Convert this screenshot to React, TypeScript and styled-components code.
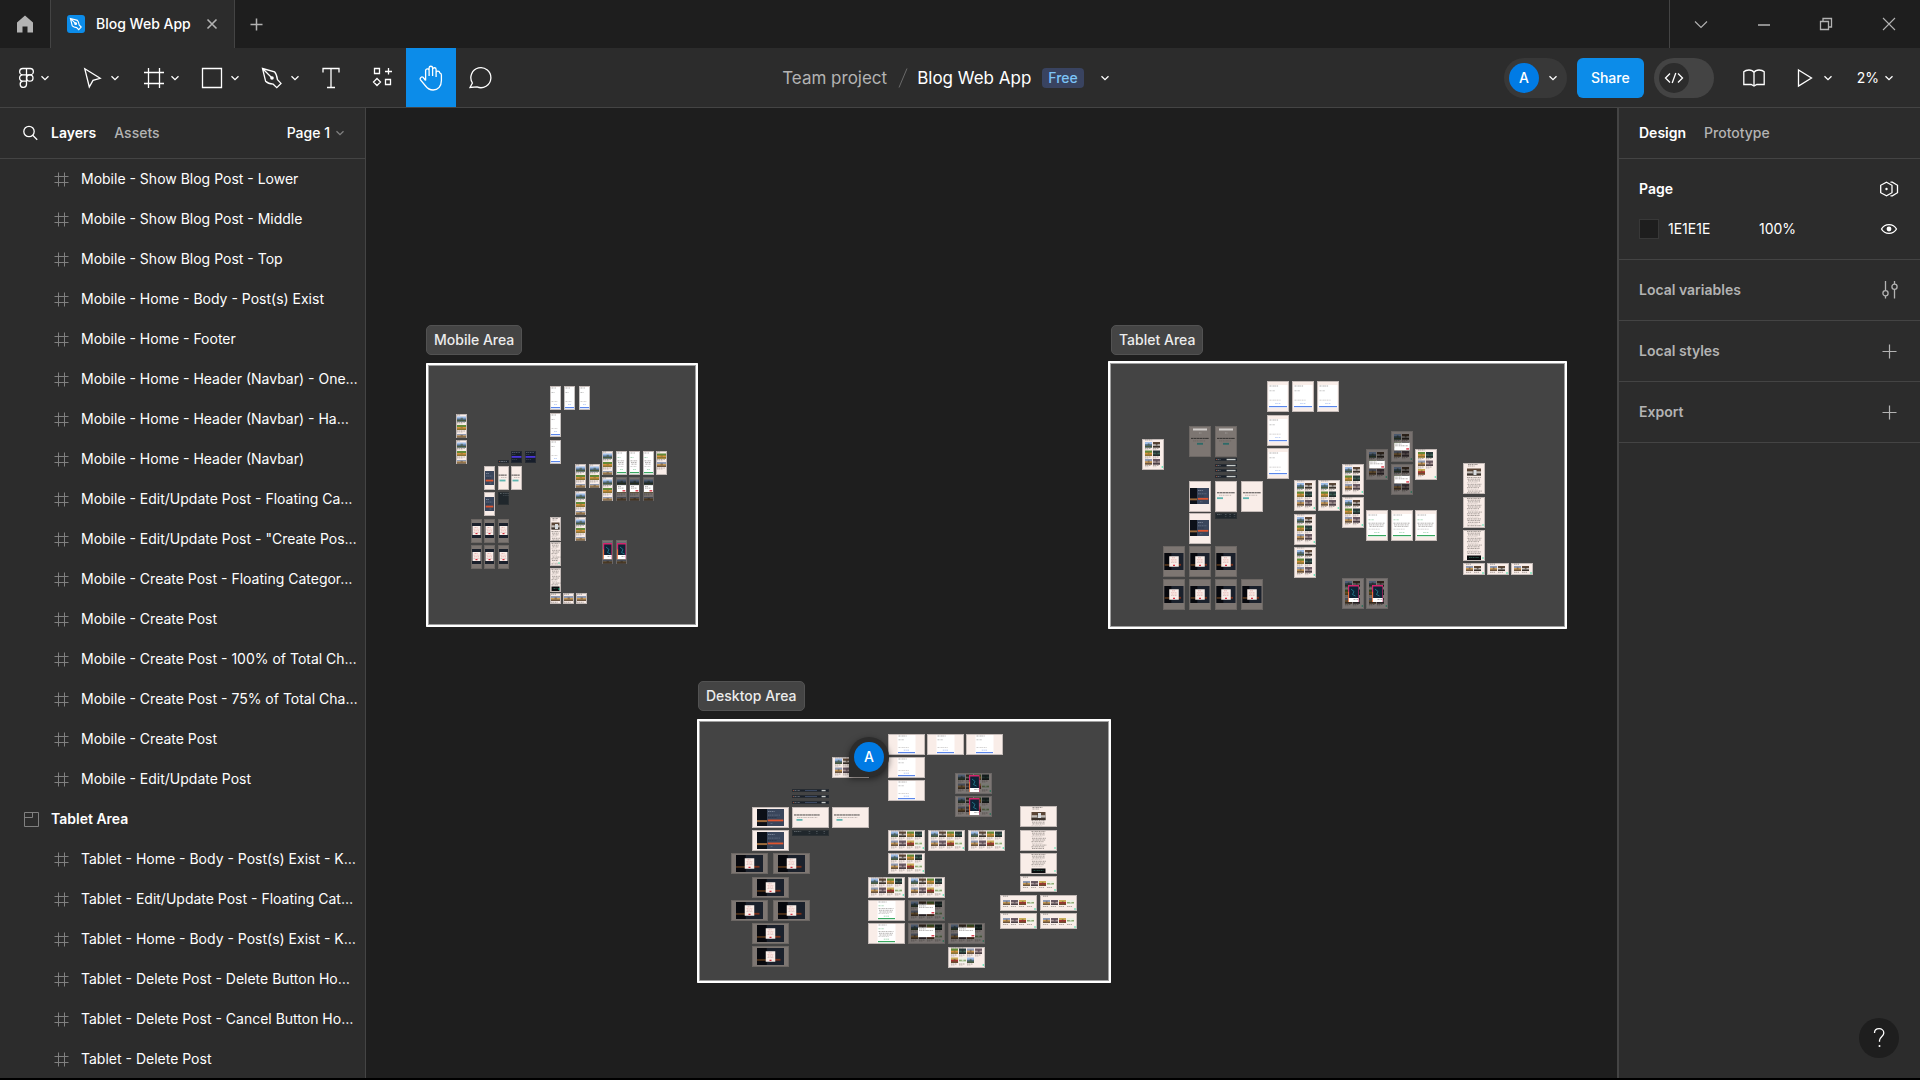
import React from "react";
import styled, { createGlobalStyle } from "styled-components";

/* ---------- theme ---------- */
const c = {
  bar: "#1e1e1e",
  panel: "#2c2c2c",
  line: "#444444",
  raised: "#383838",
  blue: "#0c8ce9",
  avatar: "#007be5",
  text: "#ffffff",
  muted: "#b3b3b3",
  faint: "#808080",
};

const GlobalStyle = createGlobalStyle`
  *, *::before, *::after { box-sizing: border-box; }
  body { margin: 0; background: #000; }
  button, input { font: inherit; color: inherit; }
  button { background: none; border: 0; padding: 0; margin: 0; }
  h1, h2, ul { margin: 0; padding: 0; font: inherit; }
`;

const Window = styled.div`
  display: flex;
  flex-direction: column;
  height: 100vh;
  overflow: hidden;
  border-bottom: 2px solid #000;
  background: ${c.bar};
  color: ${c.text};
  font-family: Inter, "Liberation Sans", sans-serif;
  font-size: 14px;
  line-height: 20px;
`;

const Icon = styled.svg<{ $size?: number }>`
  display: block;
  flex: none;
  width: ${(p) => p.$size ?? 24}px;
  height: ${(p) => p.$size ?? 24}px;
  fill: none;
  stroke: currentColor;
  stroke-width: 1.3;
`;

const Chevron = ({ size = 10 }: { size?: number }) => (
  <Icon $size={size} viewBox="0 0 10 10" aria-hidden="true">
    <path d="M1.5 3.2 5 6.7 8.500 3.2" />
  </Icon>
);

/* ---------- title bar ---------- */
const TitleBar = styled.header`
  display: flex;
  flex: none;
  height: 48px;
  color: ${c.muted};
`;
const HomeButton = styled.button`
  display: grid;
  place-items: center;
  width: 50px;
`;
const FileTab = styled.div`
  display: flex;
  align-items: center;
  gap: 11px;
  padding: 0 12px 0 16px;
  background: ${c.panel};
  border: solid ${c.line};
  border-width: 0 1px;
`;
const TabName = styled.span`
  color: ${c.text};
  font-weight: 500;
`;
const TabButton = styled.button`
  display: grid;
  place-items: center;
  width: 20px;
`;
const NewTabButton = styled.button`
  display: grid;
  place-items: center;
  width: 42px;
`;
const WindowControls = styled.div`
  display: flex;
  width: 251px;
  margin-left: auto;
  border-left: 1px solid ${c.line};
`;
const WindowButton = styled.button`
  display: grid;
  place-items: center;
  flex: 1;
`;

/* ---------- toolbar ---------- */
const Toolbar = styled.div`
  display: grid;
  grid-template-columns: 1fr auto 1fr;
  flex: none;
  height: 60px;
  background: ${c.panel};
  border-bottom: 1px solid ${c.line};
`;
const Tools = styled.div`
  display: flex;
`;
const SplitTool = styled.button<{ $width?: number; $spaced?: boolean }>`
  display: flex;
  align-items: center;
  gap: 6px;
  width: ${(p) => p.$width ?? 60}px;
  padding-left: 10px;
  margin-right: ${(p) => (p.$spaced ? 10 : 0)}px;
`;
const MenuTool = styled(SplitTool)`
  gap: 2px;
  padding-left: 14px;
`;
const Tool = styled.button<{ $active?: boolean }>`
  display: grid;
  place-items: center;
  width: 50px;
  background: ${(p) => (p.$active ? c.blue : "transparent")};
`;
const FileTitle = styled.div`
  display: flex;
  align-items: center;
  padding-right: 12px;
  font-size: 17px;
`;
const Project = styled.a`
  color: ${c.muted};
  text-decoration: none;
`;
const Slash = styled.svg`
  width: 30px;
  height: 22px;
  fill: none;
  stroke: #6a6a6a;
`;
const Plan = styled.span`
  margin-left: 11px;
  padding: 0 6px;
  border-radius: 4px;
  background: #394360;
  color: #7cc4f8;
  font-size: 14px;
  font-weight: 500;
`;
const TitleMenu = styled.button`
  display: grid;
  place-items: center;
  width: 42px;
  height: 40px;
`;
const Actions = styled.div`
  display: flex;
  align-items: center;
  justify-content: flex-end;
`;
const UserButton = styled.button`
  display: flex;
  align-items: center;
  gap: 9px;
  width: 63px;
  height: 40px;
  padding-left: 5px;
  border-radius: 20px;
  background: ${c.raised};
`;
const Avatar = styled.span`
  display: grid;
  place-items: center;
  width: 30px;
  height: 30px;
  border-radius: 50%;
  background: ${c.avatar};
  font-weight: 500;
`;
const ShareButton = styled.button`
  height: 40px;
  margin: 0 10px;
  padding: 0 14px;
  border-radius: 6px;
  background: ${c.blue};
  font-weight: 500;
`;
const DevSwitch = styled.label`
  display: flex;
  align-items: center;
  width: 60px;
  height: 40px;
  padding-left: 5px;
  border-radius: 20px;
  background: ${c.line};
`;
const HiddenInput = styled.input`
  appearance: none;
  width: 0;
  height: 0;
  margin: 0;
`;
const Knob = styled.span`
  display: grid;
  place-items: center;
  width: 30px;
  height: 30px;
  border-radius: 50%;
  background: ${c.panel};
`;
const LibraryButton = styled.button`
  display: grid;
  place-items: center;
  width: 80px;
  height: 40px;
`;
const ActionMenu = styled.button`
  display: flex;
  align-items: center;
  gap: 5px;
  height: 40px;
`;
const ZoomMenu = styled(ActionMenu)`
  margin-left: 24px;
  padding-right: 26px;
`;

/* ---------- body ---------- */
const Body = styled.div`
  display: flex;
  flex: 1;
  min-height: 0;
`;
const LayersPanel = styled.aside`
  display: flex;
  flex-direction: column;
  flex: none;
  width: 366px;
  background: ${c.panel};
  border-right: 1px solid ${c.line};
`;
const PanelHeader = styled.div`
  display: flex;
  align-items: center;
  flex: none;
  gap: 18px;
  height: 51px;
  padding: 0 20px;
  border-bottom: 1px solid ${c.line};
`;
const PanelTab = styled.button<{ $active?: boolean }>`
  color: ${(p) => (p.$active ? c.text : c.muted)};
  font-weight: ${(p) => (p.$active ? 600 : 500)};
`;
const SearchButton = styled.button`
  margin-right: -7px;
`;
const PageMenu = styled.button`
  display: flex;
  align-items: center;
  gap: 5px;
  margin-left: auto;
  font-weight: 500;

  svg { color: ${c.faint}; }
`;
const LayerList = styled.ul`
  flex: 1;
  min-height: 0;
  overflow: hidden;
  list-style: none;
`;
const LayerRow = styled.li<{ $section?: boolean }>`
  display: flex;
  align-items: center;
  gap: 11px;
  height: 40px;
  padding-left: ${(p) => (p.$section ? 23 : 53)}px;
  white-space: nowrap;
  font-weight: ${(p) => (p.$section ? 600 : 400)};

  svg { color: ${c.faint}; }
`;

const DesignPanel = styled.aside`
  position: relative;
  flex: none;
  width: 303px;
  background: ${c.panel};
  border-left: 2px solid ${c.line};
`;
const Group = styled.section`
  padding: 10px 21px 10px 20px;
  border-bottom: 1px solid ${c.line};
`;
const GroupRow = styled.div<{ $strong?: boolean }>`
  display: flex;
  align-items: center;
  justify-content: space-between;
  height: 40px;
  color: ${(p) => (p.$strong ? c.text : c.muted)};
  font-weight: 600;
`;
const FillRow = styled.div`
  display: flex;
  align-items: center;
  height: 40px;
`;
const Swatch = styled.button`
  width: 20px;
  height: 20px;
  background: #1e1e1e;
  border: 1px solid #383838;
`;
const ValueInput = styled.input<{ $width: number }>`
  width: ${(p) => p.$width}px;
  margin-left: 9px;
  padding: 0;
  border: 0;
  background: none;
  outline: 0;
`;
const IconButton = styled.button`
  margin-left: auto;
`;
const HelpButton = styled.button`
  position: absolute;
  right: 21px;
  bottom: 20px;
  display: grid;
  place-items: center;
  width: 40px;
  height: 40px;
  border-radius: 50%;
  background: #1e1e1e;
`;

/* ---------- canvas ---------- */
const Canvas = styled.main`
  position: relative;
  flex: 1;
  overflow: hidden;
  background: #1e1e1e;
`;
const SectionLabel = styled.h2<{ $x: number; $y: number }>`
  position: absolute;
  left: ${(p) => p.$x}px;
  top: ${(p) => p.$y}px;
  padding: 4px 7px;
  border: 1px solid #525252;
  border-radius: 5px;
  background: #444444;
  color: #ececec;
  font-weight: 500;
  white-space: nowrap;
`;
const SectionBox = styled.div<{ $x: number; $y: number; $w: number; $h: number }>`
  position: absolute;
  left: ${(p) => p.$x}px;
  top: ${(p) => p.$y}px;
  width: ${(p) => p.$w}px;
  height: ${(p) => p.$h}px;
  border-radius: 1px;
  background: #444444;
  box-shadow: inset 0 0 0 2px #fff, inset 0 0 0 3px #a0a0a0;
`;
const Frame = styled.svg<{ $x: number; $y: number; $w: number; $h: number }>`
  position: absolute;
  left: ${(p) => p.$x}px;
  top: ${(p) => p.$y}px;
  width: ${(p) => p.$w}px;
  height: ${(p) => p.$h}px;
`;
const Collaborator = styled.div`
  position: absolute;
  left: 483px;
  top: 629px;
  display: grid;
  place-items: center;
  width: 40px;
  height: 40px;
  border-radius: 20px 20px 20px 0;
  background: ${c.panel};
  box-shadow: 0 2px 6px rgba(0, 0, 0, 0.5);
`;

/* ---------- miniature artboards ---------- */
const CREAM = "#f9ede8";
const DIM = "#7d7672";

// sky, middle, ground
const photos: Record<string, [string, string, string]> = {
  city: ["#9dbbe6", "#4f6a80", "#4a5a3e"],
  person: ["#5b4636", "#c2bdb8", "#3b322c"],
  food: ["#5f8a38", "#d8913c", "#8a7434"],
  night: ["#26393a", "#3f6256", "#242c2c"],
  dusk: ["#8f9ab2", "#c99a55", "#6b5540"],
  table: ["#6a5a64", "#aa9898", "#4c4046"],
  wine: ["#c8ac58", "#a83030", "#6a4c30"],
  herb: ["#ecf0e4", "#8fac74", "#f4f4ee"],
};
const order = ["city", "person", "food", "night", "dusk", "table", "wine", "herb"];

const Photo = ({ x, y, w, h, name }: { x: number; y: number; w: number; h: number; name: string }) => {
  const [a, b, d] = photos[name];
  return (
    <g>
      <rect x={x} y={y} width={w} height={h} fill={a} />
      <rect x={x} y={y + h * 0.4} width={w} height={h * 0.6} fill={b} />
      <rect x={x} y={y + h * 0.7} width={w} height={h * 0.3} fill={d} />
      <rect x={x + w * 0.4} y={y + h * 0.25} width={w * 0.25} height={h * 0.4} fill={d} opacity={0.6} />
    </g>
  );
};

const Line = ({ x, y, w, color = "#4a4441", o = 0.6 }: { x: number; y: number; w: number; color?: string; o?: number }) => (
  <path d={`M${x} ${y}h${w}`} stroke={color} strokeWidth={0.7} strokeDasharray="1.6 .5 .9 .6" opacity={o} />
);

const Feed = ({ w, h, alt }: { w: number; h: number; alt?: boolean }) => {
  const phone = w < 15;
  const wide = w > 30;
  const xs = phone ? [1] : wide ? [3, 11, 19, 27] : [3, 11];
  const ys = phone ? [2.5, 11, 20] : wide ? [1.5, 10.5] : [3, 11.5, 20];
  const pw = phone ? 9 : 7;
  const ph = phone ? 5 : 5.5;
  const phoneOrder = alt ? ["food", "dusk"] : ["city", "food", "dusk"];
  let i = 0;
  return (
    <g>
      {ys.map((y, r) =>
        xs.map((x) => {
          const name = phone ? phoneOrder[r] : order[alt ? (i + 2) % 8 : i];
          i += 1;
          if (!name || (alt && !phone && i > (wide ? 7 : 5))) return null;
          return (
            <g key={`${x}-${y}`}>
              <Photo x={x} y={y} w={pw} h={Math.min(ph, h - y - 0.5)} name={name} />
              {y + ph + 1 < h && <Line x={x} y={y + ph + 1} w={pw - 1} />}
              {y + ph + 2.2 < h && <Line x={x} y={y + ph + 2.2} w={pw - 3} o={0.3} />}
            </g>
          );
        })
      )}
      {!phone && <circle cx={w - 1.7} cy={h - 3} r={0.8} fill="#1ee0a0" />}
    </g>
  );
};

type Kind =
  | "feed" | "feedAlt" | "formBlue" | "formGreen" | "signin" | "hero" | "heroDim" | "modal" | "dialog"
  | "popup" | "article" | "text" | "textEnd" | "strip" | "nav" | "menu" | "footer";

const Art = ({ kind, w, h }: { kind: Kind; w: number; h: number }) => {
  const phone = w < 15;
  const wide = w > 30;
  const mid = w / 2;
  const bg = (fill: string) => <rect width={w} height={h} fill={fill} />;
  const rows = (from: number, to: number, x: number, lw: number, color?: string) => {
    const out = [];
    for (let y = from, i = 0; y < to; y += 1.7, i += 1) {
      out.push(<Line key={y} x={x + (i % 3) / 2} y={y} w={lw - ((i * 5) % 4)} color={color} o={i % 4 === 3 ? 0.2 : 0.6} />);
    }
    return out;
  };
  switch (kind) {
    case "feed":
    case "feedAlt":
      return <>{bg(CREAM)}<Line x={phone ? 1 : 3} y={1} w={w / 3} /><Feed w={w} h={h} alt={kind === "feedAlt"} /></>;
    case "formBlue":
    case "formGreen": {
      const green = kind === "formGreen";
      const accent = green ? "#3aa860" : "#5b86ea";
      const fw = phone ? 10 : wide ? 18 : 19;
      const fx = (w - fw) / 2;
      const top = phone || wide ? 1 : 4;
      const bottom = phone || wide ? h - 1 : h - 4;
      return (
        <>
          {bg(CREAM)}
          <rect x={fx} y={top} width={fw} height={bottom - top} fill="#fff" />
          <Line x={fx + 1} y={top + 1} w={fw * 0.45} />
          <Line x={fx + 1} y={top + (bottom - top) * 0.25} w={fw * 0.3} color={green ? accent : "#777"} />
          {green && rows(top + (bottom - top) * 0.4, top + (bottom - top) * 0.6, fx + 1, fw - 3)}
          <Line x={fx + 1} y={top + (bottom - top) * 0.66} w={fw * 0.6} o={0.35} />
          <Line x={mid - fw * 0.15} y={top + (bottom - top) * 0.8} w={fw * 0.3} color={accent} />
          <rect x={fx + 0.5} y={bottom - 2} width={fw - 1} height={1.2} fill={accent} />
        </>
      );
    }
    case "signin": {
      const y = phone ? 5 : wide ? 2 : 7;
      const ih = phone ? 14 : wide ? 17 : 16;
      const x = wide ? 5 : 1;
      const iw = phone ? 9 : wide ? 27 : 19;
      const px = phone ? x : x + iw * 0.37;
      const pw = phone ? iw : iw * 0.63;
      return (
        <>
          {bg(CREAM)}
          <rect x={x} y={y} width={iw} height={ih} fill="#0c1018" />
          {!phone && <rect x={x} y={y + ih * 0.65} width={iw * 0.37} height={ih * 0.12} fill="#9a6a3c" />}
          <rect x={px} y={y} width={pw} height={ih} fill="#3a465c" />
          <Line x={px + 1} y={y + 2.5} w={pw * 0.4} color="#cfd6e4" />
          <Line x={px + 1} y={y + ih * 0.36} w={pw * 0.7} color="#8d97aa" />
          <Line x={px + 1} y={y + ih * 0.5} w={pw * 0.5} color="#1a2230" />
          <rect x={px + 0.7} y={y + ih * 0.62} width={pw - 1.4} height={1.8} fill="#e0552f" />
          <Line x={mid} y={y + ih * 0.86} w={2.5} color="#8d97aa" />
        </>
      );
    }
    case "hero":
    case "heroDim": {
      const dim = kind === "heroDim";
      const y = dim ? h * 0.4 : h * 0.38;
      return (
        <>
          {bg(dim ? DIM : CREAM)}
          {dim && <rect x={4} y={2.5} width={14} height={2} fill="#d0ccc9" />}
          {dim && <Line x={10} y={7} w={2.5} color="#ccc" />}
          <path d={`M${phone ? 0.5 : 2} ${y}H${w - (wide ? 9 : 2)}`} stroke="#222" strokeWidth={1} strokeDasharray="2.2 .3 3 .3" opacity={0.8} />
          <Line x={phone ? 3 : wide ? 5 : 4} y={y + 2.5} w={w * 0.55} o={0.45} />
          <rect x={dim ? 8 : phone ? 1.5 : wide ? 4.5 : 2} y={y + (wide ? 4 : 4.5)} width={6} height={1.8} fill={dim ? "#2d6a68" : "#5fb5b0"} />
        </>
      );
    }
    case "modal": {
      const ix = phone ? 1 : wide ? 5 : 1.5;
      const iy = phone ? 4 : wide ? 2 : 7;
      const iw = phone ? 9 : wide ? 27 : 19;
      const ih = phone ? 15 : 17;
      const mw = phone ? 8 : 9.5;
      const mh = phone ? 9 : 10.5;
      const my = iy + (ih - mh) / 2;
      return (
        <>
          {bg(DIM)}
          <rect x={ix} y={iy} width={iw} height={ih} fill="#1b212c" />
          {!phone && <rect x={ix} y={iy} width={iw * 0.36} height={ih} fill="#07080d" />}
          {!phone && <rect x={ix} y={iy + ih * 0.66} width={iw * 0.36} height={1.5} fill="#5e3a1c" />}
          {!phone && <rect x={mid} y={iy + ih * 0.64} width={iw * 0.37} height={1.8} fill="#7c3019" />}
          <rect x={mid - mw / 2} y={my} width={mw} height={mh} fill={CREAM} />
          <Line x={mid - 2} y={my + 1.5} w={3.5} color="#d07070" />
          <Line x={mid - 3} y={my + 3.2} w={6} color="#e09a96" />
          <Line x={mid - 2.5} y={my + 4.8} w={5} color="#e08080" />
          <Line x={mid - 3} y={my + 6.4} w={6} color="#b08a86" />
          <rect x={mid - 1} y={my + mh - 2} width={2} height={1.2} fill="#d8283a" />
        </>
      );
    }
    case "dialog": {
      const dw = phone ? 9 : wide ? 17 : 15.5;
      const dh = phone ? 7 : wide ? 9.5 : 7.5;
      const dy = h * (phone ? 0.34 : wide ? 0.22 : 0.38);
      return (
        <>
          {bg(CREAM)}
          <Feed w={w} h={h} />
          <rect width={w} height={h} fill="#000" opacity={0.52} />
          <rect x={mid - dw / 2} y={dy} width={dw} height={dh} fill="#fff" />
          <Line x={mid - dw / 2 + 1} y={dy + 1.3} w={dw * 0.4} />
          <Line x={mid - dw / 2 + 1} y={dy + 3} w={dw - 3} />
          <rect x={mid + dw / 2 - 3.5} y={dy + dh - 2} width={2.8} height={1.3} fill="#d8283a" />
        </>
      );
    }
    case "popup": {
      const pw = phone ? 9 : wide ? 10.5 : 11;
      const px = phone ? 1 : wide ? 14 : 6;
      const py = phone ? 3 : wide ? 2 : 7;
      const ph = phone ? 16 : 17;
      return (
        <>
          {bg(CREAM)}
          <Feed w={w} h={h} />
          <rect width={w} height={h} fill="#000" opacity={0.5} />
          <rect x={px} y={py} width={pw} height={ph} fill="#d4246c" />
          <rect x={px} y={py + ph * 0.4} width={1.2} height={ph * 0.6} fill="#e8703a" />
          <rect x={px + 1.2} y={py + 1.5} width={pw - 1.8} height={ph - 5.5} fill="#0d2436" />
          <path d={`M${px + 3} ${py + 4}l3 2.5-1.5 3 3 1.5`} stroke="#2a8ca0" strokeWidth={0.9} fill="none" opacity={0.8} />
          <rect x={px + 0.8} y={py + ph - 4} width={pw - 1.2} height={4} fill="#fff" />
          <Line x={px + pw / 2} y={py + ph - 2.5} w={pw / 2 - 1} />
        </>
      );
    }
    case "article":
    case "text":
    case "textEnd": {
      const tw = phone ? 8 : 14;
      const tx = (w - tw) / 2;
      const image = kind === "article";
      const ih = wide ? 8 : 7;
      const end = kind === "textEnd" ? h - 6 : h - 1;
      return (
        <>
          {bg(CREAM)}
          {image && <Line x={tx + 1} y={1.5} w={tw * 0.7} color="#111" />}
          {image && <Line x={tx + 1} y={3} w={tw * 0.5} />}
          {image && <Photo x={tx} y={wide ? 6 : 5.5} w={tw} h={ih} name="person" />}
          {image && <rect x={mid - 0.5} y={7} width={3} height={5} fill="#d8dce0" />}
          {rows(image ? 14.5 : 1.5, end, tx, tw, "#2d2927")}
          {kind === "textEnd" && <rect x={tx} y={h - 5.5} width={tw} height={4.5} fill="#0a0c0e" />}
          {kind === "textEnd" && <Line x={tx + 2} y={h - 3.5} w={tw - 4} color="#58b090" />}
          {!image && <circle cx={w - 2} cy={h - 3} r={0.7} fill="#1ee0a0" />}
        </>
      );
    }
    case "strip": {
      const names = wide ? ["dusk", "table", "wine", "herb"] : phone ? ["dusk"] : ["dusk", "person"];
      const pw = phone ? 9 : 7;
      return (
        <>
          {bg(CREAM)}
          <Line x={phone ? 1 : 3} y={1.2} w={5} color="#222" />
          {names.map((n, i) => (
            <g key={n}>
              <Photo x={(phone ? 1 : 3) + i * 8} y={wide ? 5 : 3} w={pw} h={5} name={n} />
              <Line x={(phone ? 1 : 3) + i * 8} y={wide ? 11.5 : 9.3} w={pw - 2} />
            </g>
          ))}
          {!phone && <circle cx={w - 2} cy={h - 2} r={0.8} fill="#1ee0a0" />}
        </>
      );
    }
    case "nav":
      return (
        <>
          {bg("#1b212a")}
          <circle cx={1.5} cy={1.5} r={0.6} fill="#a8563c" />
          <Line x={2.5} y={1.5} w={w * 0.15} color="#c6ccd6" />
          {wide && <rect x={13} y={1} width={12} height={1} fill="#3c4962" />}
          {!phone && <rect x={w * 0.8 - (wide ? 0 : 6)} y={0.8} width={wide ? 4 : 9} height={1.5} fill="#c6cac8" />}
          {phone && <Line x={4} y={1.5} w={5} color="#c6ccd6" />}
        </>
      );
    case "menu":
      return (
        <>
          {bg("#161d2a")}
          <Line x={1} y={1.5} w={8} color="#9aa4b8" />
          <rect x={0.5} y={5} width={10} height={1.8} fill="#4a35d8" />
          <Line x={1} y={3.5} w={4} color="#5a6478" />
          <Line x={1} y={8.5} w={5} color="#5a6478" />
        </>
      );
    case "footer":
      return (
        <>
          {bg("#20272c")}
          <Line x={2} y={1.5} w={w * 0.2} color="#aab0b4" />
          {[0.45, 0.65, 0.85].map((f) => (
            <g key={f}>
              <Line x={w * f} y={1.5} w={2} color="#8a9296" />
              <Line x={w * f} y={3.5} w={2} color="#5c666c" />
            </g>
          ))}
        </>
      );
  }
};

type Item = [Kind, number, number, number?, number?];

const mobile: Item[] = [
  ["formBlue", 124, 23], ["formBlue", 138, 23], ["formBlue", 153, 23], ["formBlue", 124, 50], ["formBlue", 124, 77],
  ["feed", 30, 51], ["feed", 30, 77],
  ["nav", 72, 97, 11, 3], ["menu", 85, 88, 11, 12], ["menu", 99, 88, 11, 12],
  ["signin", 58, 103], ["hero", 72, 103], ["hero", 85, 103], ["signin", 58, 129], ["footer", 72, 129, 11, 13],
  ["modal", 45, 156], ["modal", 58, 156], ["modal", 72, 156], ["modal", 45, 182], ["modal", 58, 182], ["modal", 72, 182],
  ["article", 124, 154], ["text", 124, 179], ["textEnd", 124, 205],
  ["strip", 124, 230, 11, 11], ["strip", 137, 230, 11, 11], ["strip", 150, 230, 11, 11],
  ["feed", 149, 101], ["feed", 163, 101], ["feed", 149, 128], ["feed", 149, 154],
  ["feed", 176, 88], ["formGreen", 190, 88], ["formGreen", 203, 88], ["formGreen", 217, 88], ["feedAlt", 230, 88],
  ["feed", 176, 114], ["dialog", 190, 114], ["dialog", 203, 114], ["dialog", 217, 114],
  ["popup", 176, 177], ["popup", 190, 177],
];

const tablet: Item[] = [
  ["formBlue", 159, 20], ["formBlue", 184, 20], ["formBlue", 209, 20], ["formBlue", 159, 54], ["formBlue", 159, 87],
  ["heroDim", 81, 65], ["heroDim", 107, 65], ["feed", 34, 78],
  ["nav", 107, 97, 22, 3], ["nav", 107, 103, 22, 3], ["nav", 107, 108, 22, 3], ["nav", 107, 114, 22, 3],
  ["signin", 81, 120], ["hero", 107, 120], ["hero", 133, 120], ["signin", 81, 152], ["footer", 107, 152, 22, 6],
  ["modal", 55, 185], ["modal", 81, 185], ["modal", 107, 185],
  ["modal", 55, 218], ["modal", 81, 218], ["modal", 107, 218], ["modal", 133, 218],
  ["feed", 186, 119], ["feed", 210, 119], ["feed", 186, 153], ["feed", 186, 186],
  ["feed", 234, 103], ["feed", 234, 136], ["dialog", 258, 88], ["dialog", 283, 70], ["dialog", 283, 103], ["feedAlt", 307, 88],
  ["formGreen", 258, 149], ["formGreen", 283, 149], ["formGreen", 307, 149],
  ["article", 355, 102], ["text", 355, 136], ["textEnd", 355, 169],
  ["strip", 355, 202, 22, 12], ["strip", 379, 202, 22, 12], ["strip", 403, 202, 22, 12],
  ["popup", 234, 217], ["popup", 258, 217],
];

const desktop: Item[] = [
  ["feed", 135, 38], ["nav", 95, 70, 37, 3], ["nav", 95, 76, 37, 3], ["nav", 95, 82, 37, 3],
  ["signin", 55, 88], ["hero", 95, 88], ["hero", 135, 88], ["signin", 55, 111], ["footer", 95, 111, 37, 6],
  ["modal", 34, 134], ["modal", 76, 134], ["modal", 55, 158], ["modal", 34, 181], ["modal", 76, 181],
  ["modal", 55, 204], ["modal", 55, 227],
  ["formBlue", 191, 15], ["formBlue", 230, 15], ["formBlue", 269, 15], ["formBlue", 191, 38], ["formBlue", 191, 61],
  ["popup", 258, 54], ["popup", 258, 77],
  ["article", 323, 87], ["text", 323, 111], ["textEnd", 323, 134],
  ["strip", 323, 157, 37, 16], ["strip", 303, 176, 37, 16], ["strip", 343, 176, 37, 16],
  ["strip", 303, 194, 37, 16], ["strip", 343, 194, 37, 16],
  ["feed", 191, 111], ["feed", 231, 111], ["feed", 271, 111], ["feed", 191, 134], ["feed", 171, 158], ["feed", 211, 158],
  ["formGreen", 171, 181], ["dialog", 211, 181], ["formGreen", 171, 204], ["dialog", 211, 204], ["dialog", 251, 204],
  ["feedAlt", 251, 228],
];

const sections = [
  { name: "Mobile Area", lx: 60, ly: 217, x: 60, y: 255, w: 272, h: 264, fw: 11, fh: 24, items: mobile },
  { name: "Tablet Area", lx: 745, ly: 217, x: 742, y: 253, w: 459, h: 268, fw: 22, fh: 31, items: tablet },
  { name: "Desktop Area", lx: 332, ly: 573, x: 331, y: 611, w: 414, h: 264, fw: 37, fh: 21, items: desktop },
];

const layers = [
  "Mobile - Show Blog Post - Lower",
  "Mobile - Show Blog Post - Middle",
  "Mobile - Show Blog Post - Top",
  "Mobile - Home - Body - Post(s) Exist",
  "Mobile - Home - Footer",
  "Mobile - Home - Header (Navbar) - One…",
  "Mobile - Home - Header (Navbar) - Ha…",
  "Mobile - Home - Header (Navbar)",
  "Mobile - Edit/Update Post - Floating Ca…",
  "Mobile - Edit/Update Post - \"Create Pos…",
  "Mobile - Create Post - Floating Categor…",
  "Mobile - Create Post",
  "Mobile - Create Post - 100% of Total Ch…",
  "Mobile - Create Post - 75% of Total Cha…",
  "Mobile - Create Post",
  "Mobile - Edit/Update Post",
  "Tablet Area",
  "Tablet - Home - Body - Post(s) Exist - K…",
  "Tablet - Edit/Update Post - Floating Cat…",
  "Tablet - Home - Body - Post(s) Exist - K…",
  "Tablet - Delete Post - Delete Button Ho…",
  "Tablet - Delete Post - Cancel Button Ho…",
  "Tablet - Delete Post",
];

const PlusIcon = () => (
  <Icon $size={20} viewBox="0 0 20 20"><path d="M10.5 3.5v14M3.5 10.5h14" strokeWidth={1.2} /></Icon>
);

const penPath = "M2.5 2.5 14.5 5.800c2 2.200 2.600 5 3 8l3.500 3.600-4.200 4.300-3.600-3.500c-3-.3-5.600-1-7.600-3zM2.500 2.500l9 9";

export default function App() {
  return (
    <>
      <GlobalStyle />
      <Window>
        <TitleBar>
          <HomeButton aria-label="Home">
            <Icon $size={18} viewBox="0 0 18 18"><path d="M1 7.500 9 .500l8 7V17.500h-5.500v-6h-5v6H1z" fill="#b3b3b3" stroke="none" /></Icon>
          </HomeButton>
          <FileTab>
            <Icon $size={18} viewBox="0 0 18 18">
              <rect width="18" height="18" rx="3" fill={c.blue} stroke="none" />
              <g transform="translate(2 2) scale(.58)" stroke="#fff" strokeWidth="2"><path d={penPath} /><circle cx="11.5" cy="11.5" r="1.5" fill="#fff" /></g>
            </Icon>
            <TabName>Blog Web App</TabName>
            <TabButton aria-label="Close tab">
              <Icon $size={12} viewBox="0 0 12 12"><path d="M1.500 1.500l9 9M10.500 1.500l-9 9" strokeWidth={1.6} /></Icon>
            </TabButton>
          </FileTab>
          <NewTabButton aria-label="New tab">
            <Icon $size={14} viewBox="0 0 14 14"><path d="M7.500 1.500v12M1.500 7.500h12" strokeWidth={1.5} /></Icon>
          </NewTabButton>
          <WindowControls>
            <WindowButton aria-label="Tabs"><Icon $size={14} viewBox="0 0 14 14"><path d="M1 4.500l6 6 6-6" strokeWidth={1.1} /></Icon></WindowButton>
            <WindowButton aria-label="Minimize"><Icon $size={14} viewBox="0 0 14 14"><path d="M1 8h12" strokeWidth={2} stroke="#8e8e8e" /></Icon></WindowButton>
            <WindowButton aria-label="Restore"><Icon $size={14} viewBox="0 0 14 14"><path d="M1.500 4.500h8v8h-8zM4 4V1.500h8.500v8.500H10" /></Icon></WindowButton>
            <WindowButton aria-label="Close"><Icon $size={14} viewBox="0 0 14 14"><path d="M1 1l12 12M13 1 1 13" strokeWidth={1.1} /></Icon></WindowButton>
          </WindowControls>
        </TitleBar>

        <Toolbar>
          <Tools>
            <MenuTool aria-label="Main menu" $spaced>
              <Icon viewBox="0 0 24 24">
                <path d="M12.500 2.500H8.800a3.100 3.100 0 0 0 0 6.300H12.500zM12.500 2.500h3.700a3.100 3.100 0 0 1 0 6.300H12.500zM12.500 8.800H8.800a3.100 3.100 0 0 0 0 6.400H12.500zM12.500 15.200H8.800a3.150 3.150 0 1 0 3.700 3.100z" />
                <circle cx="15.800" cy="12" r="3.200" />
              </Icon>
              <Chevron />
            </MenuTool>
            <SplitTool aria-label="Move">
              <Icon viewBox="0 0 24 24"><path d="M4.800 2.800 20.200 12.300 13 14.400 9.300 21z" /></Icon>
              <Chevron />
            </SplitTool>
            <SplitTool aria-label="Frame">
              <Icon viewBox="0 0 24 24"><path d="M8.500 2v20M19.500 2v20M4 6.500h20M4 17.500h20" /></Icon>
              <Chevron />
            </SplitTool>
            <SplitTool aria-label="Rectangle">
              <Icon viewBox="0 0 24 24"><path d="M2.500 2.500h19v19h-19z" /></Icon>
              <Chevron />
            </SplitTool>
            <SplitTool aria-label="Pen" $width={56}>
              <Icon viewBox="0 0 24 24"><path d={penPath} /><circle cx="12" cy="12" r="1.800" fill="#fff" stroke="none" /></Icon>
              <Chevron />
            </SplitTool>
            <Tool aria-label="Text">
              <Icon viewBox="0 0 24 24"><path d="M4 6.500v-4h16v4M12 2.500v19M8 21.500h8" /></Icon>
            </Tool>
            <Tool aria-label="Resources">
              <Icon viewBox="0 0 24 24"><path d="M5.500 2.500h5v5h-5zM16.500 13.500h5v5h-5zM19.500 2v6.500M16 5.500h7M8 12.500l3.500 3.500L8 19.500 4.500 16z" /></Icon>
            </Tool>
            <Tool aria-label="Hand" $active>
              <Icon $size={26} viewBox="0 0 26 26">
                <path d="M7.600 15.500V5.600a1.750 1.750 0 0 1 3.500 0V11M11.100 5V3a1.750 1.750 0 0 1 3.500 0v8M14.600 4.500a1.750 1.750 0 0 1 3.500 0V12M18.100 8a1.750 1.750 0 0 1 3.600-.2c.9.3 1.700 1 1.700 2.200v5.500c0 5.500-3.200 9.500-8.300 9.500-3.500 0-5.500-1.300-7.500-4L2.300 14.600a1.900 1.900 0 0 1 2.800-2.300l2.500 3.200" />
              </Icon>
            </Tool>
            <Tool aria-label="Comment">
              <Icon viewBox="0 0 24 24"><path d="M1 21.500 3.400 17A10 10 0 1 1 8 20.900L1 21.500z" /></Icon>
            </Tool>
          </Tools>

          <FileTitle>
            <Project href="#">Team project</Project>
            <Slash viewBox="0 0 30 22" aria-hidden="true"><path d="M20 1.500 12 20.500" /></Slash>
            <h1>Blog Web App</h1>
            <Plan>Free</Plan>
            <TitleMenu aria-label="File options"><Chevron /></TitleMenu>
          </FileTitle>

          <Actions>
            <UserButton aria-label="Account"><Avatar>A</Avatar><Chevron /></UserButton>
            <ShareButton>Share</ShareButton>
            <DevSwitch>
              <HiddenInput type="checkbox" role="switch" aria-label="Dev Mode" />
              <Knob><Icon $size={20} viewBox="0 0 20 20"><path d="M6 5.500 1.500 10 6 14.500M14 5.500l4.500 4.500-4.500 4.500M11.800 5 8.200 15" /></Icon></Knob>
            </DevSwitch>
            <LibraryButton aria-label="Libraries">
              <Icon viewBox="0 0 24 24"><path d="M12 6.500C11 4.800 9 4 7 4S3 4.600 1.800 5.800V18.500h7.400L12 20l2.800-1.500h7.400V5.800C21 4.600 19 4 17 4s-4 .8-5 2.500zM12 6.500V19" /></Icon>
            </LibraryButton>
            <ActionMenu aria-label="Present">
              <Icon viewBox="0 0 24 24"><path d="M4.500 4 17.500 12 4.500 20z" /></Icon>
              <Chevron />
            </ActionMenu>
            <ZoomMenu>2%<Chevron /></ZoomMenu>
          </Actions>
        </Toolbar>

        <Body>
          <LayersPanel>
            <PanelHeader>
              <SearchButton aria-label="Search layers">
                <Icon $size={20} viewBox="0 0 20 20"><circle cx="9" cy="8.500" r="5.200" /><path d="M12.700 12.300l4.500 4.500" /></Icon>
              </SearchButton>
              <PanelTab $active>Layers</PanelTab>
              <PanelTab>Assets</PanelTab>
              <PageMenu>Page 1<Chevron /></PageMenu>
            </PanelHeader>
            <LayerList>
              {layers.map((name, i) => {
                const section = name === "Tablet Area";
                return (
                  <LayerRow key={i} $section={section}>
                    {section ? (
                      <Icon $size={17} viewBox="0 0 17 17"><path d="M1.500 1.500h14v14h-14zM9.500 1.500v5h-8" strokeWidth={1} /></Icon>
                    ) : (
                      <Icon $size={17} viewBox="0 0 17 17"><path d="M5.500 1.500v14M11.500 1.500v14M1.500 5.500h14M1.500 11.500h14" strokeWidth={1} /></Icon>
                    )}
                    {name}
                  </LayerRow>
                );
              })}
            </LayerList>
          </LayersPanel>

          <Canvas>
            {sections.map((s) => (
              <React.Fragment key={s.name}>
                <SectionLabel $x={s.lx} $y={s.ly}>{s.name}</SectionLabel>
                <SectionBox $x={s.x} $y={s.y} $w={s.w} $h={s.h}>
                  {s.items.map(([kind, x, y, w = s.fw, h = s.fh], i) => (
                    <Frame key={i} $x={x} $y={y} $w={w} $h={h} viewBox={`0 0 ${w} ${h}`} aria-hidden="true">
                      <Art kind={kind} w={w} h={h} />
                      <rect x={0.5} y={0.5} width={w - 1} height={h - 1} fill="none" stroke="#444" opacity={0.3} />
                    </Frame>
                  ))}
                </SectionBox>
              </React.Fragment>
            ))}
            <Collaborator><Avatar>A</Avatar></Collaborator>
          </Canvas>

          <DesignPanel>
            <PanelHeader>
              <PanelTab $active>Design</PanelTab>
              <PanelTab>Prototype</PanelTab>
            </PanelHeader>
            <Group>
              <GroupRow $strong>
                Page
                <IconButton aria-label="Variable mode">
                  <Icon $size={20} viewBox="0 0 20 20">
                    <path d="M7.500 3.200 13 6.300v7.400l-5.500 3.100-5.800-3.100V6.300zM11.500 3.200h1.800l5.200 3.100v7.400l-5.200 3.100h-1.800" />
                    <circle cx="7.500" cy="10" r="1.200" fill="#fff" stroke="none" />
                  </Icon>
                </IconButton>
              </GroupRow>
              <FillRow>
                <Swatch aria-label="Page color" />
                <ValueInput $width={82} aria-label="Page color hex" defaultValue="1E1E1E" />
                <ValueInput $width={60} aria-label="Page color opacity" defaultValue="100%" />
                <IconButton aria-label="Toggle visibility">
                  <Icon $size={20} viewBox="0 0 20 20">
                    <path d="M2.500 10c1.500-2.700 4.200-4.400 7.500-4.400s6 1.700 7.500 4.400c-1.500 2.700-4.200 4.400-7.500 4.400S4 12.700 2.500 10z" />
                    <circle cx="10" cy="10" r="2.400" fill="#fff" stroke="none" />
                  </Icon>
                </IconButton>
              </FillRow>
            </Group>
            <Group>
              <GroupRow>
                Local variables
                <IconButton aria-label="Open variables">
                  <Icon $size={20} viewBox="0 0 20 20">
                    <path d="M6.500 1v9.500M6.500 16v2.500M15.500 1v3M15.500 9.500v9" />
                    <circle cx="6.500" cy="13.300" r="2.600" /><circle cx="15.500" cy="6.700" r="2.600" />
                  </Icon>
                </IconButton>
              </GroupRow>
            </Group>
            <Group><GroupRow>Local styles<IconButton aria-label="Create style"><PlusIcon /></IconButton></GroupRow></Group>
            <Group><GroupRow>Export<IconButton aria-label="Add export"><PlusIcon /></IconButton></GroupRow></Group>
            <HelpButton aria-label="Help">
              <Icon viewBox="0 0 24 24"><path d="M7.500 7c0-2.600 2-4.300 4.600-4.300s4.700 1.700 4.700 4.300c0 3.600-4.300 4-4.300 7.500v1.300" /><circle cx="12.500" cy="20" r="1" fill="#fff" stroke="none" /></Icon>
            </HelpButton>
          </DesignPanel>
        </Body>
      </Window>
    </>
  );
}
